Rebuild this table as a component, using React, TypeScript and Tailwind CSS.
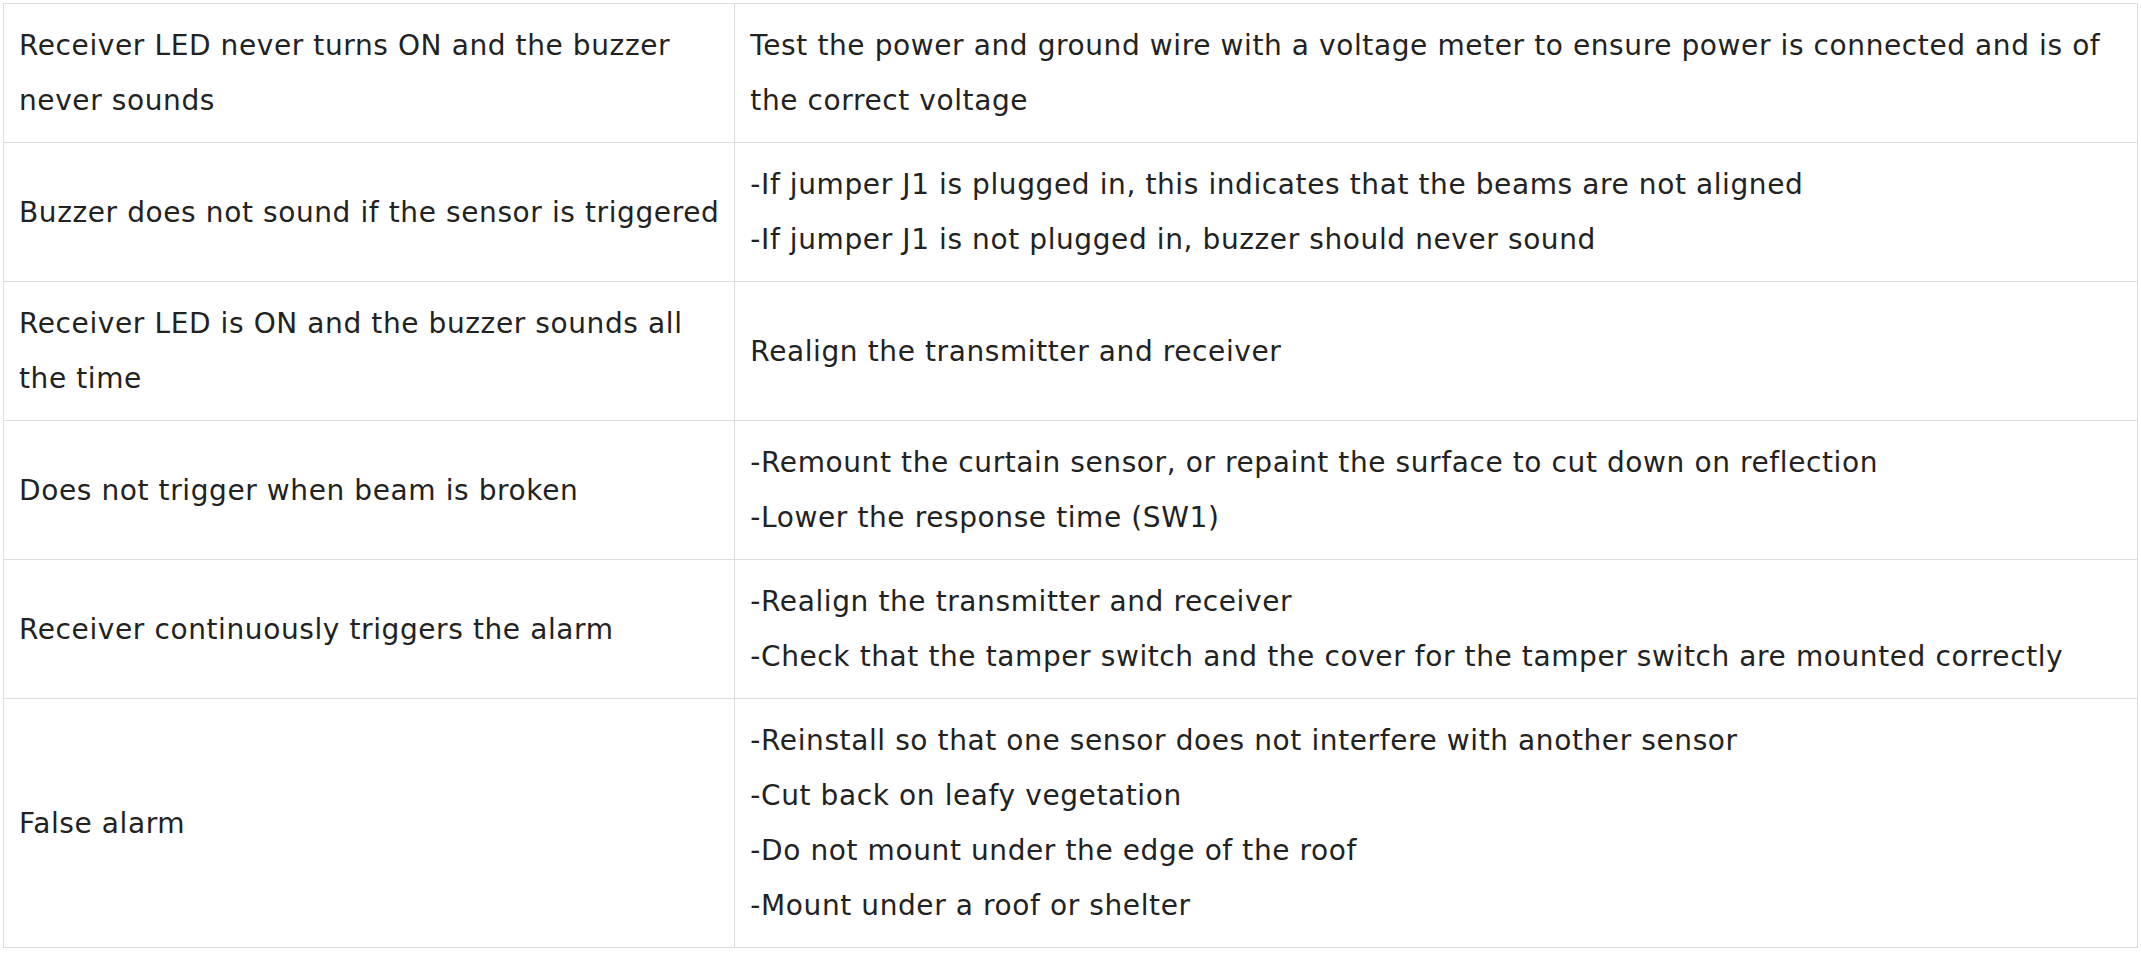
const rows: { issue: string[]; fix: string[] }[] = [
  {
    issue: ["Receiver LED never turns ON and the buzzer", "never sounds"],
    fix: [
      "Test the power and ground wire with a voltage meter to ensure power is connected and is of",
      "the correct voltage",
    ],
  },
  {
    issue: ["Buzzer does not sound if the sensor is triggered"],
    fix: [
      "-If jumper J1 is plugged in, this indicates that the beams are not aligned",
      "-If jumper J1 is not plugged in, buzzer should never sound",
    ],
  },
  {
    issue: ["Receiver LED is ON and the buzzer sounds all", "the time"],
    fix: ["Realign the transmitter and receiver"],
  },
  {
    issue: ["Does not trigger when beam is broken"],
    fix: [
      "-Remount the curtain sensor, or repaint the surface to cut down on reflection",
      "-Lower the response time (SW1)",
    ],
  },
  {
    issue: ["Receiver continuously triggers the alarm"],
    fix: [
      "-Realign the transmitter and receiver",
      "-Check that the tamper switch and the cover for the tamper switch are mounted correctly",
    ],
  },
  {
    issue: ["False alarm"],
    fix: [
      "-Reinstall so that one sensor does not interfere with another sensor",
      "-Cut back on leafy vegetation",
      "-Do not mount under the edge of the roof",
      "-Mount under a roof or shelter",
    ],
  },
];

function Lines({ lines }: { lines: string[] }) {
  return (
    <>
      {lines.map((l, i) => (
        <span key={i} className="block whitespace-nowrap">
          {l}
        </span>
      ))}
    </>
  );
}

export default function App() {
  return (
    <main className="min-h-screen bg-white p-[3px]">
      <table
        className="w-full border-collapse text-[28px] leading-[55px] tracking-[0.6px] text-[#222222]"
        style={{ fontFamily: '"DejaVu Sans", "Noto Sans", sans-serif' }}
      >
        <tbody>
          {rows.map((r, i) => (
            <tr key={i}>
              <td className="w-[731px] border border-[#dddddd] px-[15px] py-[14px] align-middle">
                <Lines lines={r.issue} />
              </td>
              <td className="border border-[#dddddd] px-[15px] py-[14px] align-middle">
                <Lines lines={r.fix} />
              </td>
            </tr>
          ))}
        </tbody>
      </table>
    </main>
  );
}
